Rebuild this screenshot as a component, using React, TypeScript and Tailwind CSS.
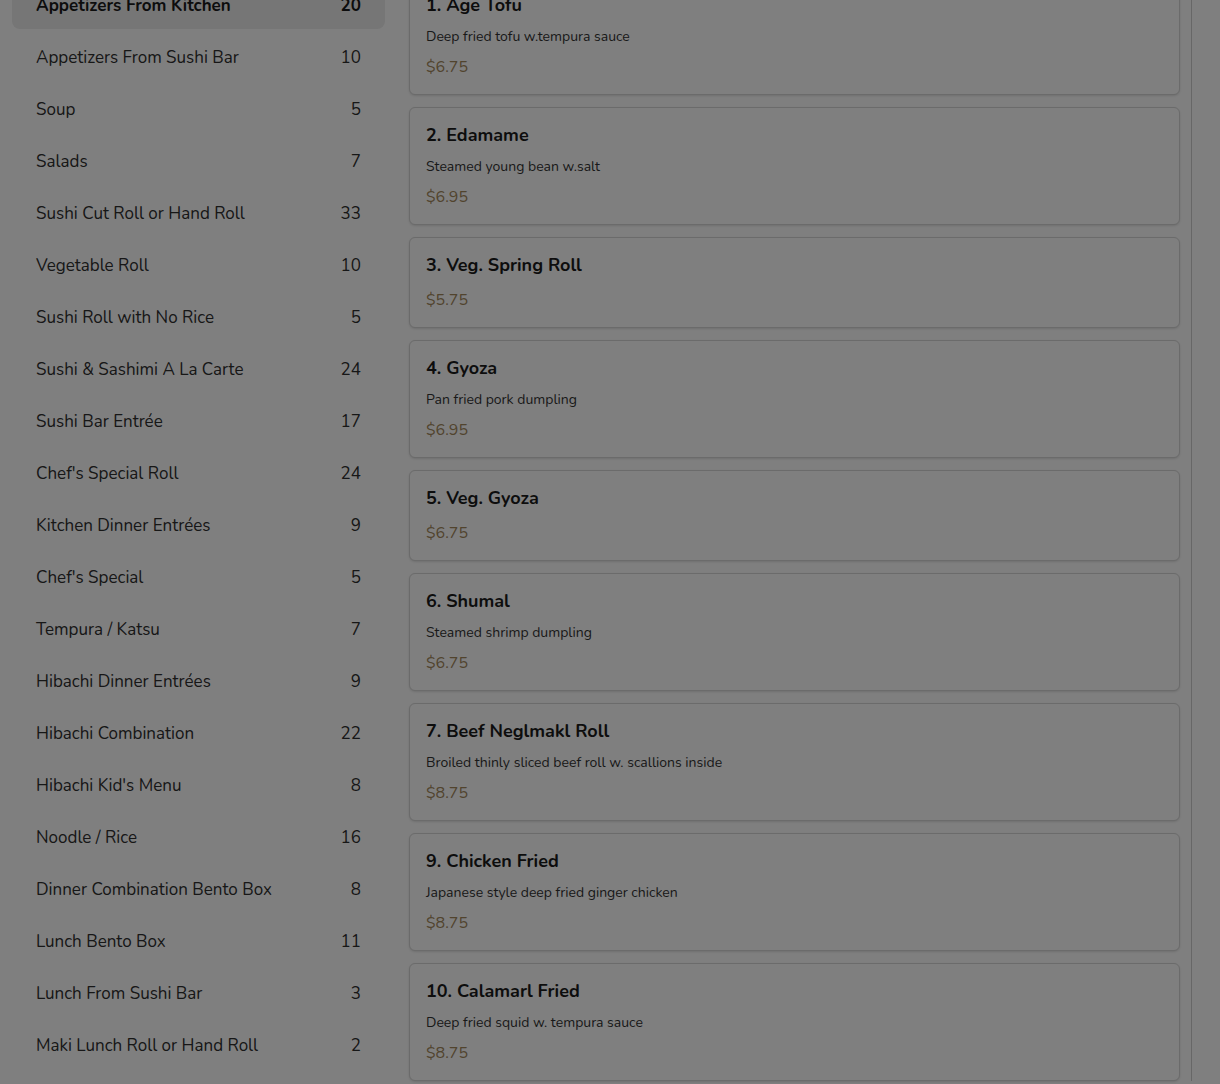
const categories = [
  { name: "Appetizers From Kitchen", count: 20 },
  { name: "Appetizers From Sushi Bar", count: 10 },
  { name: "Soup", count: 5 },
  { name: "Salads", count: 7 },
  { name: "Sushi Cut Roll or Hand Roll", count: 33 },
  { name: "Vegetable Roll", count: 10 },
  { name: "Sushi Roll with No Rice", count: 5 },
  { name: "Sushi & Sashimi A La Carte", count: 24 },
  { name: "Sushi Bar Entrée", count: 17 },
  { name: "Chef's Special Roll", count: 24 },
  { name: "Kitchen Dinner Entrées", count: 9 },
  { name: "Chef's Special", count: 5 },
  { name: "Tempura / Katsu", count: 7 },
  { name: "Hibachi Dinner Entrées", count: 9 },
  { name: "Hibachi Combination", count: 22 },
  { name: "Hibachi Kid's Menu", count: 8 },
  { name: "Noodle / Rice", count: 16 },
  { name: "Dinner Combination Bento Box", count: 8 },
  { name: "Lunch Bento Box", count: 11 },
  { name: "Lunch From Sushi Bar", count: 3 },
  { name: "Maki Lunch Roll or Hand Roll", count: 2 },
];

const items = [
  { title: "1. Age Tofu", desc: "Deep fried tofu w.tempura sauce", price: "$6.75" },
  { title: "2. Edamame", desc: "Steamed young bean w.salt", price: "$6.95" },
  { title: "3. Veg. Spring Roll", desc: "", price: "$5.75" },
  { title: "4. Gyoza", desc: "Pan fried pork dumpling", price: "$6.95" },
  { title: "5. Veg. Gyoza", desc: "", price: "$6.75" },
  { title: "6. Shumal", desc: "Steamed shrimp dumpling", price: "$6.75" },
  { title: "7. Beef Neglmakl Roll", desc: "Broiled thinly sliced beef roll w. scallions inside", price: "$8.75" },
  { title: "9. Chicken Fried", desc: "Japanese style deep fried ginger chicken", price: "$8.75" },
  { title: "10. Calamarl Fried", desc: "Deep fried squid w. tempura sauce", price: "$8.75" },
];

export default function App() {
  return (
    <div className="relative h-[1084px] overflow-hidden bg-white" style={{ fontFamily: "Nunito, Lato, 'Noto Sans', sans-serif" }}>
      <div className="-mt-[23px] flex pl-3">
        {/* Categories */}
        <div className="w-[373px] shrink-0 pt-1 flex flex-col gap-1">
          {categories.map((c, i) => (
            <div key={c.name}
              className={`h-12 px-6 pt-px flex items-center justify-between rounded-lg text-[17px] ${i === 0 ? "bg-[#ececec] font-bold text-[#1a1a1a]" : "text-[#2e2e2e]"}`}>
              <span>{c.name}</span>
              <span>{c.count}</span>
            </div>
          ))}
        </div>

        {/* Items */}
        <div className="ml-6 w-[783px] pr-[11px] border-r border-[#cfcfcf] flex flex-col gap-3">
          {items.map(it => (
            <div key={it.title} className="rounded-md border border-[#d6d6d6] bg-white px-4 pt-[17px] pb-[15px] shadow-sm">
              <p className={`text-lg leading-5 font-bold text-[#1a1a1a] ${it.desc ? "mb-3" : "mb-[13px]"}`}>{it.title}</p>
              {it.desc && <p className="text-sm leading-5 text-[#333333] mb-2">{it.desc}</p>}
              <p className="text-base leading-6 text-[#a3885c]">{it.price}</p>
            </div>
          ))}
        </div>
      </div>

      {/* modal backdrop */}
      <div className="absolute inset-0 bg-black/50" />
    </div>
  );
}
